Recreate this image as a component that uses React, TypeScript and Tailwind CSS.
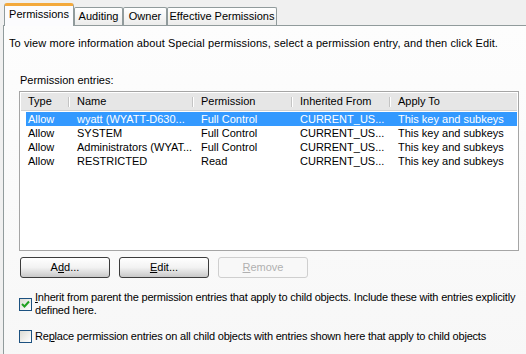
const columns = [
  { label: "Type", width: "w-[49px]" },
  { label: "Name", width: "w-[124px]" },
  { label: "Permission", width: "w-[99px]" },
  { label: "Inherited From", width: "w-[98px]" },
  { label: "Apply To", width: "flex-1" },
];

const entries = [
  ["Allow", "wyatt (WYATT-D630...", "Full Control", "CURRENT_US...", "This key and subkeys"],
  ["Allow", "SYSTEM", "Full Control", "CURRENT_US...", "This key and subkeys"],
  ["Allow", "Administrators (WYAT...", "Full Control", "CURRENT_US...", "This key and subkeys"],
  ["Allow", "RESTRICTED", "Read", "CURRENT_US...", "This key and subkeys"],
];

const rowWidths = ["w-[44px]", "w-[124px]", "w-[99px]", "w-[98px]", "flex-1"];

function Tab({ label, width, active }: { label: string; width: string; active?: boolean }) {
  if (active) {
    return (
      <div
        className={`${width} relative z-10 -mb-px flex h-[23px] items-start justify-center rounded-t-[3px] border border-b-0 border-[#919b9c] border-t-[3px] border-t-[#f3a93c] bg-[#fcfcfe] pt-[2px]`}
      >
        {label}
      </div>
    );
  }
  return (
    <div
      className={`${width} flex h-[18px] items-center justify-center rounded-t-[2px] border border-b-0 border-[#919b9c] bg-gradient-to-b from-white to-[#ececeb]`}
    >
      {label}
    </div>
  );
}

function Button({ children, disabled }: { children: React.ReactNode; disabled?: boolean }) {
  if (disabled) {
    return (
      <div className="flex h-[21px] w-[90px] items-center justify-center rounded-[3px] border border-[#cfcfcf] bg-[#f8f8f8] text-[#b0b0b0]">
        {children}
      </div>
    );
  }
  return (
    <div className="flex h-[21px] w-[90px] items-center justify-center rounded-[3px] border border-[#3c3c3c] bg-gradient-to-b from-white via-[#f2f2f2] to-[#c9c9c9]">
      {children}
    </div>
  );
}

function Checkbox({ checked }: { checked?: boolean }) {
  return (
    <div className="flex h-[13px] w-[13px] shrink-0 items-center justify-center border border-[#1c5180] bg-gradient-to-br from-[#dcdcd4] to-white">
      {checked && (
        <svg width="9" height="9" viewBox="0 0 9 9">
          <path d="M1 4 L3.5 6.5 L8 1.5" stroke="#21a121" strokeWidth="2" fill="none" />
        </svg>
      )}
    </div>
  );
}

export default function App() {
  return (
    <div className="h-[354px] w-[526px] overflow-hidden bg-[#f0f0f0] font-['Liberation_Sans',Arial,sans-serif] text-[11px] leading-[13px] text-black">
      <div className="flex items-end pl-[4px] pt-[3px]">
        <Tab label="Permissions" width="w-[70px]" active />
        <Tab label="Auditing" width="w-[49px]" />
        <Tab label="Owner" width="w-[44px]" />
        <Tab label="Effective Permissions" width="w-[110px]" />
      </div>

      <div className="ml-[3px] h-[340px] border-l border-t border-[#919b9c] bg-gradient-to-b from-[#fdfdfd] to-[#f7f7f7] pt-[11px]">
        <p className="whitespace-nowrap pl-[5px] tracking-[0.1px]">
          To view more information about Special permissions, select a permission entry, and then click Edit.
        </p>

        <p className="mt-[24px] pl-[16px]">Permission entries:</p>

        <div className="ml-[15px] mt-[4px] h-[160px] w-[500px] border border-[#a5a5a5] bg-white p-px">
          <div className="flex h-[18px] border-b border-[#d0d0d0] bg-[#e6e6e6]">
            {columns.map((col, i) => (
              <div key={col.label} className={`${col.width} relative flex items-center pl-[7px]`}>
                {col.label}
                {i < columns.length - 1 && (
                  <span className="absolute right-0 top-[4px] h-[10px] w-[2px] border-l border-r border-l-[#c4c4c4] border-r-white" />
                )}
              </div>
            ))}
          </div>

          <div className="mt-px">
            {entries.map((row, r) => (
              <div
                key={r}
                className={`ml-[5px] flex h-[14px] items-center ${r === 0 ? "bg-[#3399ff] text-white" : ""}`}
              >
                {row.map((cell, c) => (
                  <div key={c} className={`${rowWidths[c]} ${c === 0 ? "pl-[2px]" : "pl-[7px]"} whitespace-nowrap`}>
                    {cell}
                  </div>
                ))}
              </div>
            ))}
          </div>
        </div>

        <div className="ml-[16px] mt-[6px] flex gap-[9px]">
          <Button>
            A<span className="underline">d</span>d...
          </Button>
          <Button>
            <span className="underline">E</span>dit...
          </Button>
          <Button disabled>
            <span className="underline">R</span>emove
          </Button>
        </div>

        <div className="ml-[15px] mt-[13px] flex items-center gap-[3px]">
          <Checkbox checked />
          <span className="whitespace-nowrap tracking-[-0.2px]">
            <span className="underline">I</span>nherit from parent the permission entries that apply to child objects. Include these with entries explicitly
            <br />
            defined here.
          </span>
        </div>

        <div className="ml-[15px] mt-[13px] flex items-center gap-[3px]">
          <Checkbox />
          <span className="whitespace-nowrap tracking-[-0.2px]">
            Re<span className="underline">p</span>lace permission entries on all child objects with entries shown here that apply to child objects
          </span>
        </div>
      </div>
    </div>
  );
}
